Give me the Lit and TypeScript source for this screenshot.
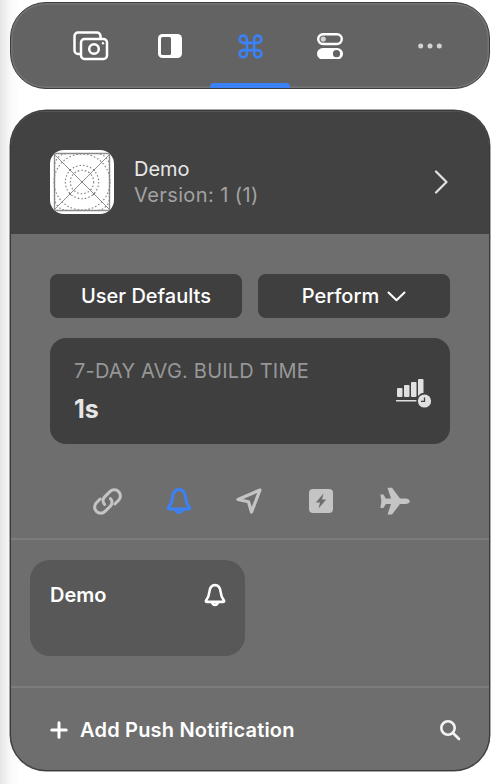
import { LitElement, html, css, svg } from 'lit';
import { customElement } from 'lit/decorators.js';

const BLUE = '#3b82f6';

const nodes = [
  [20, 20],
  [44, 20],
  [20, 44],
  [44, 44],
];

const appIcon = html`<svg class="app-icon" width="64" height="64" viewBox="0 0 64 64">
  <defs><clipPath id="squircle"><rect x="0" y="0" width="64" height="64" rx="14" /></clipPath></defs>
  <rect x="0" y="0" width="64" height="64" rx="14" fill="#fff" />
  <g clip-path="url(#squircle)" fill="none" stroke="#8f8f8f" stroke-width="1">
    <rect x="4.5" y="3.5" width="55" height="57" rx="1" stroke-width="1.4" />
    <path d="M0 0L64 64M64 0L0 64" />
    <g stroke-dasharray="1.6 2" stroke="#808080" stroke-width="1.1">
      <circle cx="32" cy="32" r="11.7" />
      <circle cx="32" cy="32" r="16.7" />
      <circle cx="32" cy="32" r="28" />
      <rect x="4.5" y="3.5" width="55" height="57" rx="13" />
    </g>
  </g>
  <g fill="#808080">
    ${nodes.map(([x, y]) => svg`<rect x="${x - 1}" y="${y - 1}" width="2" height="2" />`)}
    <rect x="31" y="31" width="2" height="2" />
  </g>
</svg>`;

const cameraIcon = html`<svg class="camera" width="36" height="30" viewBox="0 0 36 30" fill="none" stroke="#fff" stroke-width="2.5" stroke-linejoin="round" stroke-linecap="round">
  <path d="M7.5 23H5a3.5 3.5 0 0 1-3.5-3.5V5A3.5 3.5 0 0 1 5 1.5h19A3.5 3.5 0 0 1 27.5 5v2" />
  <rect x="8" y="8" width="26" height="20" rx="3.5" />
  <circle cx="21" cy="18" r="4.8" />
  <circle cx="30" cy="12.2" r="1.2" fill="#fff" stroke="none" />
</svg>`;

const sidebarIcon = html`<svg width="24" height="24" viewBox="0 0 24 24">
  <rect width="24" height="24" rx="4.5" fill="#fff" />
  <rect x="3" y="3" width="10" height="18" rx="1.5" fill="#636363" />
</svg>`;

const commandIcon = html`<svg width="29" height="29" viewBox="0 0 24 24" fill="none" stroke="${BLUE}" stroke-width="2.1">
  <path d="M18 3a3 3 0 0 0-3 3v12a3 3 0 0 0 3 3 3 3 0 0 0 3-3 3 3 0 0 0-3-3H6a3 3 0 0 0-3 3 3 3 0 0 0 3 3 3 3 0 0 0 3-3V6a3 3 0 0 0-3-3 3 3 0 0 0-3 3 3 3 0 0 0 3 3h12a3 3 0 0 0 3-3 3 3 0 0 0-3-3z" />
</svg>`;

const togglesIcon = html`<svg width="26" height="26" viewBox="0 0 26 26">
  <rect x="1.2" y="1.2" width="23.6" height="9.8" rx="4.9" fill="none" stroke="#fff" stroke-width="2.4" />
  <circle cx="6.2" cy="6.1" r="2.6" fill="#d4d4d4" />
  <rect x="0" y="15" width="26" height="11.5" rx="5.75" fill="#fff" />
  <circle cx="19.5" cy="20.7" r="3.6" fill="#636363" />
</svg>`;

const moreIcon = html`<svg width="24" height="6" viewBox="0 0 24 6" fill="#d2d2d2">
  <circle cx="2.7" cy="3" r="2.5" /><circle cx="12" cy="3" r="2.5" /><circle cx="21.3" cy="3" r="2.5" />
</svg>`;

const chevronRight = html`<svg width="14" height="24" viewBox="0 0 14 24" fill="none" stroke="#e2e2e2" stroke-width="2.2" stroke-linecap="round" stroke-linejoin="round">
  <path d="M2 1.5L12.5 12L2 22.5" />
</svg>`;

const chevronDown = html`<svg width="19" height="11" viewBox="0 0 19 11" fill="none" stroke="#fff" stroke-width="2" stroke-linecap="round" stroke-linejoin="round">
  <path d="M1.5 1.5L9.5 9.2L17.5 1.5" />
</svg>`;

const buildIcon = html`<svg width="36" height="30" viewBox="0 0 36 30">
  <g fill="#e0e0e0">
    <rect x="1" y="10" width="5.5" height="9" rx="1" />
    <rect x="8" y="7" width="5.5" height="12" rx="1" />
    <rect x="15" y="4" width="5.5" height="15" rx="1" />
    <rect x="22" y="1" width="5.5" height="18" rx="1" />
    <rect x="0" y="22" width="21" height="1.5" />
    <circle cx="28.5" cy="23" r="7.4" stroke="#3f3f3f" stroke-width="1.6" />
  </g>
  <path d="M28.5 19.5V23.4H25" fill="none" stroke="#3f3f3f" stroke-width="1.3" />
</svg>`;

const bellPaths = svg`
  <path d="M14 2.5C10 2.5 8 6 7.5 10C7 15 6.5 17 3.5 20.5C3 21.5 3.5 22 4.5 22H23.5C24.5 22 25 21.5 24.5 20.5C21.5 17 21 15 20.5 10C20 6 18 2.5 14 2.5Z" />
  <path d="M10.5 22a3.5 3.5 0 0 0 7 0" />`;

const linkIcon = html`<svg width="35" height="35" viewBox="0 0 30 30" fill="none" stroke="#c4c4c4" stroke-width="2.6" stroke-linecap="round">
  <path d="M12.5 17.5a4.5 4.5 0 0 1 0-6.4l4.6-4.6a5.2 5.2 0 0 1 7.4 7.4l-3.2 3.2" />
  <path d="M17.5 12.5a4.5 4.5 0 0 1 0 6.4l-4.6 4.6a5.2 5.2 0 0 1-7.4-7.4l3.2-3.2" />
</svg>`;

const navIcon = html`<svg width="28" height="28" viewBox="0 0 28 28" fill="none" stroke="#c4c4c4" stroke-width="3.2" stroke-linejoin="round">
  <path d="M25 3L3 12.5L13.5 14.8L16.5 25Z" />
</svg>`;

const boltIcon = html`<svg width="24" height="24" viewBox="0 0 24 24">
  <rect width="24" height="24" rx="4" fill="#c4c4c4" />
  <path d="M14.5 4.5L6.8 13.5H11L9.5 19.5L17.2 10.5H13Z" fill="#6e6e6e" />
</svg>`;

const planeIcon = html`<svg width="30" height="28" viewBox="0 0 30 28" fill="#c4c4c4">
  <path d="M29.8 14.2c0-1.3-2-2.7-4.3-2.7H20L12 .8H7.5L11 11.5H5.8L3.4 7.4H.4L1.4 14.2 .4 21H3.4L5.8 17H11L7.5 27.6H12L20 17h5.5c2.3 0 4.3-1.5 4.3-2.8Z" />
</svg>`;

const searchIcon = html`<svg width="22" height="22" viewBox="0 0 22 22" fill="none" stroke="#f4f4f4" stroke-width="2.6" stroke-linecap="round">
  <circle cx="9" cy="9" r="6.7" />
  <path d="M14 14L20 20" />
</svg>`;

const plusIcon = html`<svg width="18" height="18" viewBox="0 0 18 18" fill="none" stroke="#fff" stroke-width="3" stroke-linecap="round">
  <path d="M9 1.8V16.2M1.8 9H16.2" />
</svg>`;

@customElement('app-root')
export class AppRoot extends LitElement {
  static styles = css`
    :host {
      display: block;
      width: 498px;
      height: 784px;
      box-sizing: border-box;
      padding: 2px 8px 0 10px;
      overflow: hidden;
      background: linear-gradient(90deg, #e6e6e6, #fafafa 11px, #fff 20px);
      font-family: Inter, 'Liberation Sans', sans-serif;
      color: #fff;
    }

    .toolbar {
      position: relative;
      box-sizing: border-box;
      display: grid;
      grid-template-columns: 80px 80px 80px 80px 120px;
      align-items: center;
      justify-items: center;
      height: 87px;
      padding-left: 39px;
      padding-top: 1px;
      border-radius: 36px;
      background: #636363;
      border: 1px solid #3c3c3c;
      box-shadow: inset 0 0 0 1.5px #757575;
    }

    .camera { margin-left: 2px; }

    .toolbar-indicator {
      position: absolute;
      left: 199px;
      bottom: 0;
      width: 80px;
      height: 5px;
      border-radius: 4px 4px 0 0;
      background: #3b82f6;
    }

    .card {
      box-sizing: border-box;
      display: flex;
      flex-direction: column;
      margin-top: 21px;
      height: 661px;
      border-radius: 36px;
      overflow: hidden;
      background: #6e6e6e;
      border: 1px solid #3a3a3a;
      box-shadow: 0 0 0 0.5px #555;
    }

    .header {
      display: flex;
      align-items: center;
      box-sizing: border-box;
      height: 123px;
      flex: none;
      padding: 18px 41px 0 39px;
      background: #424242;
      border-top: 1px solid #555;
    }

    .app-icon { flex: none; }

    .title {
      flex: 1;
      margin-left: 20px;
      font-size: 20px;
      line-height: 26px;
      color: #e8e8e8;
    }

    .version {
      color: #a2a2a2;
      letter-spacing: 0.4px;
    }

    .actions {
      display: grid;
      grid-template-columns: 192px 192px;
      gap: 16px;
      padding: 40px 39px 0;
    }

    .action {
      display: flex;
      align-items: center;
      justify-content: center;
      gap: 8px;
      height: 44px;
      border-radius: 8px;
      background: #3f3f3f;
      font-size: 20px;
      font-weight: 500;
    }

    .stat {
      display: flex;
      align-items: center;
      justify-content: space-between;
      box-sizing: border-box;
      height: 106px;
      margin: 20px 39px 0;
      padding: 0 18px 0 24px;
      border-radius: 16px;
      background: #3f3f3f;
    }

    .stat-label {
      font-size: 20px;
      line-height: 22px;
      letter-spacing: 0.2px;
      color: #979797;
    }

    .stat-value {
      margin-top: 14px;
      font-size: 25px;
      line-height: 26px;
      font-weight: 700;
      color: #e6e6e6;
    }

    .stat-icon { margin-top: 4px; }

    .tabs {
      display: grid;
      grid-template-columns: 72px 72px 68px 76px 72px;
      align-items: center;
      justify-items: center;
      height: 96px;
      box-sizing: border-box;
      padding: 20px 0 0 60px;
      border-bottom: 2px solid #7c7c7c;
    }

    .list {
      flex: 1;
      padding: 20px 19px;
    }

    .cell {
      display: flex;
      align-items: flex-start;
      justify-content: space-between;
      box-sizing: border-box;
      width: 215px;
      height: 96px;
      padding: 23px 18px 0 20px;
      border-radius: 20px;
      background: #585858;
      font-size: 20px;
      line-height: 24px;
      font-weight: 600;
    }

    .footer {
      display: flex;
      align-items: center;
      box-sizing: border-box;
      flex: none;
      height: 84px;
      padding: 1px 28px 0 39px;
      border-top: 2px solid #7c7c7c;
      font-size: 20px;
      font-weight: 600;
      letter-spacing: 0.2px;
    }

    .footer span {
      flex: 1;
      margin-left: 12px;
    }

    svg { display: block; }
  `;

  render() {
    return html`
      <div class="toolbar">
        ${cameraIcon} ${sidebarIcon} ${commandIcon} ${togglesIcon} ${moreIcon}
        <div class="toolbar-indicator"></div>
      </div>
      <div class="card">
        <div class="header">
          ${appIcon}
          <div class="title">
            <div>Demo</div>
            <div class="version">Version: 1 (1)</div>
          </div>
          ${chevronRight}
        </div>
        <div class="actions">
          <div class="action">User Defaults</div>
          <div class="action">Perform ${chevronDown}</div>
        </div>
        <div class="stat">
          <div>
            <div class="stat-label">7-DAY AVG. BUILD TIME</div>
            <div class="stat-value">1s</div>
          </div>
          <div class="stat-icon">${buildIcon}</div>
        </div>
        <div class="tabs">
          ${linkIcon}
          <svg width="28" height="28" viewBox="0 0 28 28" fill="none" stroke="${BLUE}" stroke-width="3" stroke-linejoin="round">${bellPaths}</svg>
          ${navIcon} ${boltIcon} ${planeIcon}
        </div>
        <div class="list">
          <div class="cell">
            <span>Demo</span>
            <svg width="24" height="24" viewBox="0 0 28 28" fill="none" stroke="#fff" stroke-width="3" stroke-linejoin="round">${bellPaths}</svg>
          </div>
        </div>
        <div class="footer">
          ${plusIcon}
          <span>Add Push Notification</span>
          ${searchIcon}
        </div>
      </div>
    `;
  }
}
